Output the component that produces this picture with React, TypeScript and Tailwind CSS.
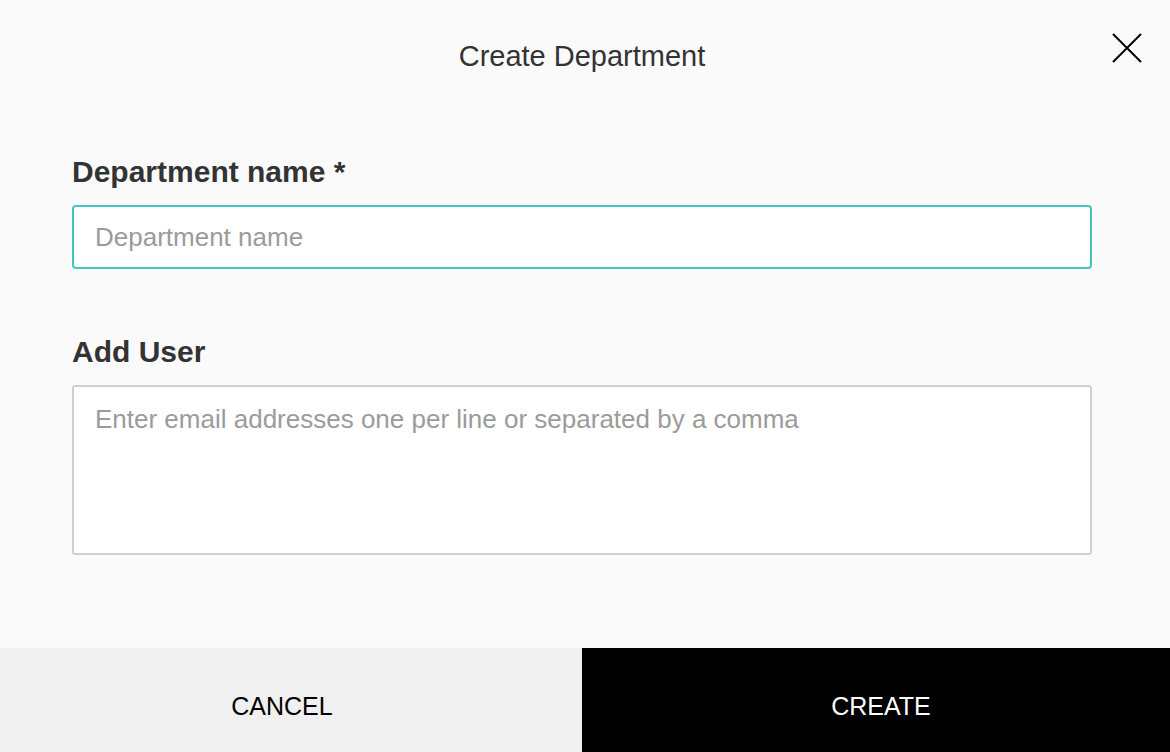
import React, { useState } from 'react';

const App: React.FC = () => {
  const [name, setName] = useState('');
  const [emails, setEmails] = useState('');

  return (
    <div
      className="flex flex-col h-[752px] w-full bg-[#fafafa] text-[#333333]"
      style={{ fontFamily: '"Liberation Sans", Arial, sans-serif' }}
    >
      {/* header */}
      <div className="relative flex h-[112px] items-center justify-center">
        <h1 className="text-[29px] font-medium leading-none text-[#333333] pr-[6px]">Create Department</h1>
        <button className="absolute right-[28px] top-[33px] h-[30px] w-[30px] text-black" aria-label="Close">
          <svg viewBox="0 0 30 30" className="h-[30px] w-[30px]" fill="none" stroke="currentColor" strokeWidth="2">
            <path d="M1 1 L29 29 M29 1 L1 29" />
          </svg>
        </button>
      </div>

      {/* body */}
      <div className="flex-1 pl-[72px] pt-[42px]">
        <label className="block text-[30px] font-bold leading-[36px] mb-[15px]">Department name *</label>
        <input
          type="text"
          value={name}
          onChange={(e) => setName(e.target.value)}
          placeholder="Department name"
          className="block h-[64px] w-[1020px] rounded-[4px] border-2 border-[#45c4c0] bg-white pl-[21px] text-[26px] text-[#333333] outline-none placeholder:text-[#9b9b9b]"
        />

        <label className="mt-[65px] block text-[30px] font-bold leading-[36px] mb-[15px]">Add User</label>
        <textarea
          value={emails}
          onChange={(e) => setEmails(e.target.value)}
          placeholder="Enter email addresses one per line or separated by a comma"
          className="block h-[170px] w-[1020px] resize-none rounded-[3px] border-2 border-[#d0d0d0] bg-white px-[21px] pt-[16px] text-[26px] leading-[32px] text-[#333333] outline-none placeholder:text-[#9b9b9b]"
        />
      </div>

      {/* footer */}
      <div className="flex h-[104px]">
        <button className="flex w-[582px] items-center justify-center bg-[#f0f0f0] pt-[14px] pr-[18px] text-[25px] text-black">
          CANCEL
        </button>
        <button className="flex flex-1 items-center justify-center bg-black pt-[14px] pl-[10px] text-[25px] text-white">
          CREATE
        </button>
      </div>
    </div>
  );
};

export default App;
